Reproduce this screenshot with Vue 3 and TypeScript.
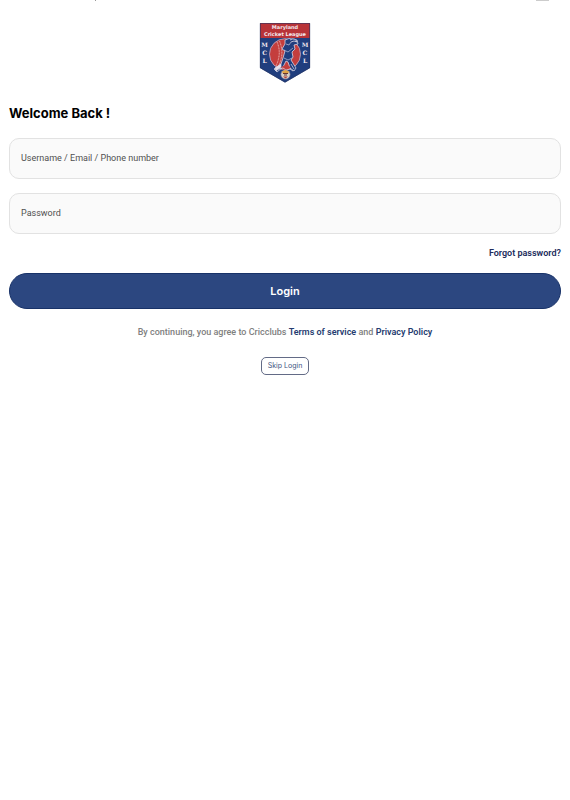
<script setup lang="ts">
import { ref } from 'vue'

const username = ref('')
const password = ref('')
const letters = [
  { char: 'M', y: 24 },
  { char: 'C', y: 32 },
  { char: 'L', y: 40 },
]
</script>

<template>
  <div class="screen">
    <div class="status" aria-hidden="true">
      <span class="status-time"></span>
      <span class="status-battery"></span>
    </div>

    <main class="content">
      <svg class="logo" viewBox="0 0 52 60" role="img" aria-label="Maryland Cricket League">
        <path d="M1 0H51V45L26 59.5L1 45Z" fill="#203e7e" />
        <path d="M1 0H51V15H1Z" fill="#b83338" />
        <path d="M1.3 .3H50.7V44.8L26 59.2L1.3 44.8Z" fill="none" stroke="#263765" stroke-width=".7" />
        <text class="logo-name" x="26" y="6">Maryland</text>
        <text class="logo-name" x="26" y="13">Cricket League</text>
        <g v-for="letter in letters" :key="letter.char">
          <text class="logo-side" x="5.7" :y="letter.y">{{ letter.char }}</text>
          <text class="logo-side" x="46" :y="letter.y">{{ letter.char }}</text>
        </g>
        <circle cx="26" cy="31.2" r="15.5" fill="#c43e3d" stroke="#b9aecb" stroke-width=".8" />
        <path d="M18 19Q23 30 17 43M20.5 18Q25.5 30 20 42" fill="none" stroke="#edc7c5" stroke-width=".9" stroke-dasharray="1 .6" />
        <path d="M26 17L30 15.5L38 17L39 21L35 22L36 26L33 29L34 34L32 37L37 45L35 48L31 45L29 39L27 38L24 44L18 49L15 46L22 41L24 35L26 28L23 26L26 21Z" fill="#203e7e" stroke="#d6d4e4" stroke-width=".8" stroke-linejoin="round" />
        <path d="M31 17Q36 14 38 19Q35 17 32 19" fill="#203e7e" stroke="#dedbe8" stroke-width=".8" />
        <path d="M27 21L30 22L32 19M25 27L29 29L34 25M25 35L29 37L33 35" fill="none" stroke="#bfc1d8" stroke-width=".7" />
        <path d="M16 45L22 41L22 44L17 48ZM32 41L35 46" fill="#e5e1eb" stroke="#e5e1eb" stroke-width=".7" />
        <path d="M22 44L27 42L32 44L29 47H24Z" fill="#c43e3d" />
        <path d="M19 46L24 45L27 47L31 46L34 48" fill="none" stroke="#dcd7e4" stroke-width=".8" />
        <circle cx="26.5" cy="51.5" r="4.6" fill="#d9d1c9" stroke="#807b91" stroke-width=".6" />
        <path d="M23 48.5L26.5 47L30 48.5L29 51H24Z" fill="#dfa344" />
        <path d="M24 50.5H29M25 52H28" stroke="#653630" stroke-width="1" />
        <path d="M24 53.5H29L26.5 55.5Z" fill="#b5433a" />
      </svg>

      <h1>Welcome Back !</h1>

      <form @submit.prevent>
        <input v-model="username" class="field" type="text" autocomplete="username" placeholder="Username / Email / Phone number" aria-label="Username / Email / Phone number" />
        <input v-model="password" class="field" type="password" autocomplete="current-password" placeholder="Password" aria-label="Password" />
        <a class="forgot" href="#forgot">Forgot password?</a>
        <button class="login" type="submit">Login</button>
      </form>

      <p class="terms">
        By continuing, you agree to Cricclubs <a href="#terms">Terms of service</a> and <a href="#privacy">Privacy Policy</a>
      </p>
      <button class="skip" type="button">Skip Login</button>
    </main>
  </div>
</template>

<style>
body {
  background: #fff;
}
</style>

<style scoped>
.screen {
  min-height: 100vh;
  background: #fff;
  font-family: Roboto, "Liberation Sans", sans-serif;
  color: #000;
}

.status {
  display: flex;
  justify-content: space-between;
  height: 1px;
  padding: 0 21px 0 95px;
}

.status-time {
  width: 1px;
  background: #999;
}

.status-battery {
  width: 13px;
  background: #ccc;
}

.content {
  display: flex;
  flex-direction: column;
  align-items: center;
  padding: 22px 9px;
}

.logo {
  width: 52px;
  height: 60px;
}

.logo-name,
.logo-side {
  font-family: "DejaVu Sans", sans-serif;
  font-weight: 700;
  fill: #f4e9ee;
  text-anchor: middle;
}

.logo-name {
  font-size: 5px;
}

.logo-side {
  font-family: "DejaVu Serif", serif;
  font-size: 6px;
}

h1 {
  align-self: flex-start;
  margin: 20px 0 15px;
  font-family: Inter, "Liberation Sans", sans-serif;
  font-size: 13px;
  line-height: 20px;
  font-weight: 700;
}

form {
  display: flex;
  flex-direction: column;
  align-self: stretch;
}

.field {
  box-sizing: border-box;
  width: 100%;
  height: 41px;
  margin: 0 0 14px;
  padding: 0 11px 2px;
  border: 1px solid #e2e2e2;
  border-radius: 10px;
  background: #fafafa;
  font: 400 9px/12px Roboto, "Liberation Sans", sans-serif;
  color: #222;
}

.field::placeholder {
  color: #505050;
  opacity: 1;
}

a {
  color: #253c70;
  text-decoration: none;
}

.forgot {
  align-self: flex-end;
  margin-bottom: 15px;
  font-size: 9px;
  line-height: 10px;
  font-weight: 600;
  color: #202b5b;
}

.login {
  height: 36px;
  padding: 0;
  border: 1px solid #183268;
  border-radius: 18px;
  background: #2c4780;
  color: #fff;
  font: 600 11px/16px Inter, "Liberation Sans", sans-serif;
}

.terms {
  margin: 17px 0 19px;
  font-size: 9px;
  line-height: 12px;
  font-weight: 500;
  color: #808080;
}

.terms a {
  font-weight: 600;
}

.skip {
  height: 18px;
  padding: 0 6px;
  border: 1px solid #636b86;
  border-radius: 5px;
  background: #fff;
  color: #405482;
  font: 400 7px/10px Inter, "Liberation Sans", sans-serif;
}
</style>
